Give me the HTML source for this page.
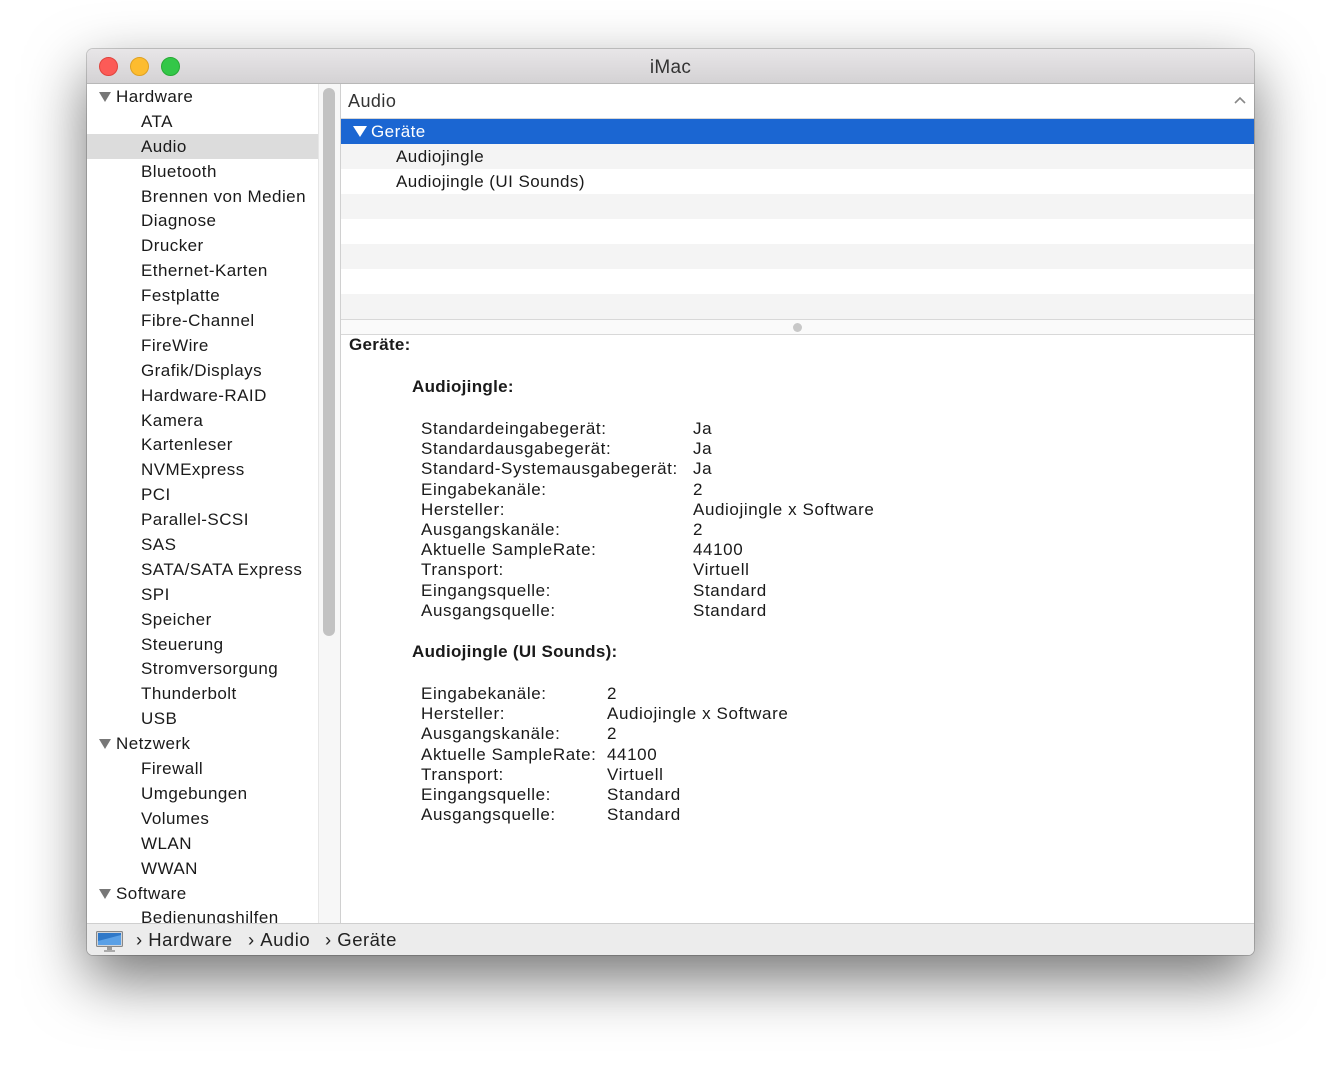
<!DOCTYPE html>
<html><head><meta charset="utf-8"><style>
*{margin:0;padding:0;box-sizing:border-box}
body{width:1341px;height:1080px;background:#fff;position:relative;overflow:hidden;font-family:"Helvetica Neue","Liberation Sans",Arial,sans-serif;font-size:17px;color:#1a1a1a;letter-spacing:0.45px}
.win{position:absolute;left:87px;top:49px;width:1167px;height:906px;border-radius:6px;background:#fff;box-shadow:0 24px 60px rgba(0,0,0,.55),0 0 0 1px rgba(0,0,0,.18);overflow:hidden}
.title{position:absolute;left:0;top:0;width:100%;height:35px;background:linear-gradient(#e8e6e8,#d4d2d4);border-bottom:1px solid #b8b8b8;text-align:center;line-height:37px;font-size:19px;color:#333;letter-spacing:0.3px}
.tl{position:absolute;top:8px;width:19px;height:19px;border-radius:50%}
.side{position:absolute;left:0;top:35px;width:231px;height:839px;background:#fff;overflow:hidden}
.side div{height:24.9px;line-height:25px;padding-left:54px;white-space:nowrap}
.side div.h{padding-left:29px;position:relative}
.side div.h:before{content:"";position:absolute;left:12px;top:8px;border-left:6px solid transparent;border-right:6px solid transparent;border-top:10px solid #777}
.side div.sel{background:#dcdcdc}
.track{position:absolute;left:231px;top:35px;width:23px;height:839px;background:#f7f7f7;border-left:1px solid #e6e6e6;border-right:1px solid #d0d0d0}
.thumb{position:absolute;left:4px;top:4px;width:12px;height:548px;border-radius:6px;background:#c2c2c2}
.right{position:absolute;left:254px;top:35px;width:913px;height:839px}
.hdr{height:35px;line-height:34px;padding-left:7px;font-size:18px;color:#333;border-bottom:1px solid #d6d6d6;position:relative}
.row{height:25px;line-height:26px;white-space:nowrap}
.g{background:#f4f4f4}
.selrow{background:#1b66d2;color:#fff;padding-left:30px;position:relative}
.selrow:before{content:"";position:absolute;left:12px;top:7px;border-left:7px solid transparent;border-right:7px solid transparent;border-top:11px solid #fff}
.split{height:16px;border-top:1px solid #d8d8d8;border-bottom:1px solid #d8d8d8;background:#fafafa;position:relative}
.dot{position:absolute;left:452px;top:3px;width:9px;height:9px;border-radius:50%;background:#c8c8c8}
.det{position:absolute;left:0;top:251px;width:913px;line-height:20.2px;letter-spacing:0.6px}
.det b{position:absolute;font-weight:bold;letter-spacing:0.3px}
.kv{position:absolute;white-space:pre}
.status{position:absolute;left:0;top:874px;width:100%;height:32px;background:#ececec;border-top:1px solid #cfcfcf;line-height:31px;font-size:18.5px;color:#222;letter-spacing:0.5px}
</style></head><body>
<div class="win">
<div class="title">iMac
<span class="tl" style="left:12px;background:#fc5b57;border:1px solid #e0443e"></span>
<span class="tl" style="left:43px;background:#fdbc2f;border:1px solid #dea123"></span>
<span class="tl" style="left:74px;background:#33c748;border:1px solid #27aa35"></span>
</div>
<div class="side">
<div class="h">Hardware</div><div>ATA</div><div class="sel">Audio</div><div>Bluetooth</div><div>Brennen von Medien</div><div>Diagnose</div><div>Drucker</div><div>Ethernet-Karten</div><div>Festplatte</div><div>Fibre-Channel</div><div>FireWire</div><div>Grafik/Displays</div><div>Hardware-RAID</div><div>Kamera</div><div>Kartenleser</div><div>NVMExpress</div><div>PCI</div><div>Parallel-SCSI</div><div>SAS</div><div>SATA/SATA Express</div><div>SPI</div><div>Speicher</div><div>Steuerung</div><div>Stromversorgung</div><div>Thunderbolt</div><div>USB</div>
<div class="h">Netzwerk</div><div>Firewall</div><div>Umgebungen</div><div>Volumes</div><div>WLAN</div><div>WWAN</div>
<div class="h">Software</div><div>Bedienungshilfen</div>
</div>
<div class="track"><div class="thumb"></div></div>
<div class="right">
<div class="hdr">Audio<svg style="position:absolute;right:8px;top:12px" width="12" height="8"><path d="M1 7L6 2L11 7" stroke="#888" stroke-width="1.6" fill="none"/></svg></div>
<div class="row selrow">Geräte</div>
<div class="row g" style="padding-left:55px">Audiojingle</div>
<div class="row" style="padding-left:55px">Audiojingle (UI Sounds)</div>
<div class="row g"></div><div class="row"></div><div class="row g"></div><div class="row"></div><div class="row g"></div>
<div class="split"><div class="dot"></div></div>
<div class="det">
<b style="left:8px;top:0">Geräte:</b>
<b style="left:71px;top:42px">Audiojingle:</b>
<div class="kv" style="left:80px;top:84px">Standardeingabegerät:
Standardausgabegerät:
Standard-Systemausgabegerät:
Eingabekanäle:
Hersteller:
Ausgangskanäle:
Aktuelle SampleRate:
Transport:
Eingangsquelle:
Ausgangsquelle:</div>
<div class="kv" style="left:352px;top:84px">Ja
Ja
Ja
2
Audiojingle x Software
2
44100
Virtuell
Standard
Standard</div>
<b style="left:71px;top:307px">Audiojingle (UI Sounds):</b>
<div class="kv" style="left:80px;top:349px">Eingabekanäle:
Hersteller:
Ausgangskanäle:
Aktuelle SampleRate:
Transport:
Eingangsquelle:
Ausgangsquelle:</div>
<div class="kv" style="left:266px;top:349px">2
Audiojingle x Software
2
44100
Virtuell
Standard
Standard</div>
</div>
</div>
<div class="status">
<svg style="position:absolute;left:9px;top:7px" width="27" height="22"><rect x="0.5" y="0.5" width="26" height="15" rx="1" fill="#cfd3d8" stroke="#888"/><rect x="2" y="2" width="23" height="12" fill="#2f78c8"/><path d="M2 10L25 4V14H2Z" fill="#5aa0e6"/><rect x="11" y="16" width="5" height="3" fill="#999"/><rect x="8" y="19" width="11" height="2" fill="#aaa"/></svg>
<span style="position:absolute;left:49px">›&nbsp;Hardware</span>
<span style="position:absolute;left:161px">›&nbsp;Audio</span>
<span style="position:absolute;left:238px">›&nbsp;Geräte</span>
</div>
</div>
</body></html>
